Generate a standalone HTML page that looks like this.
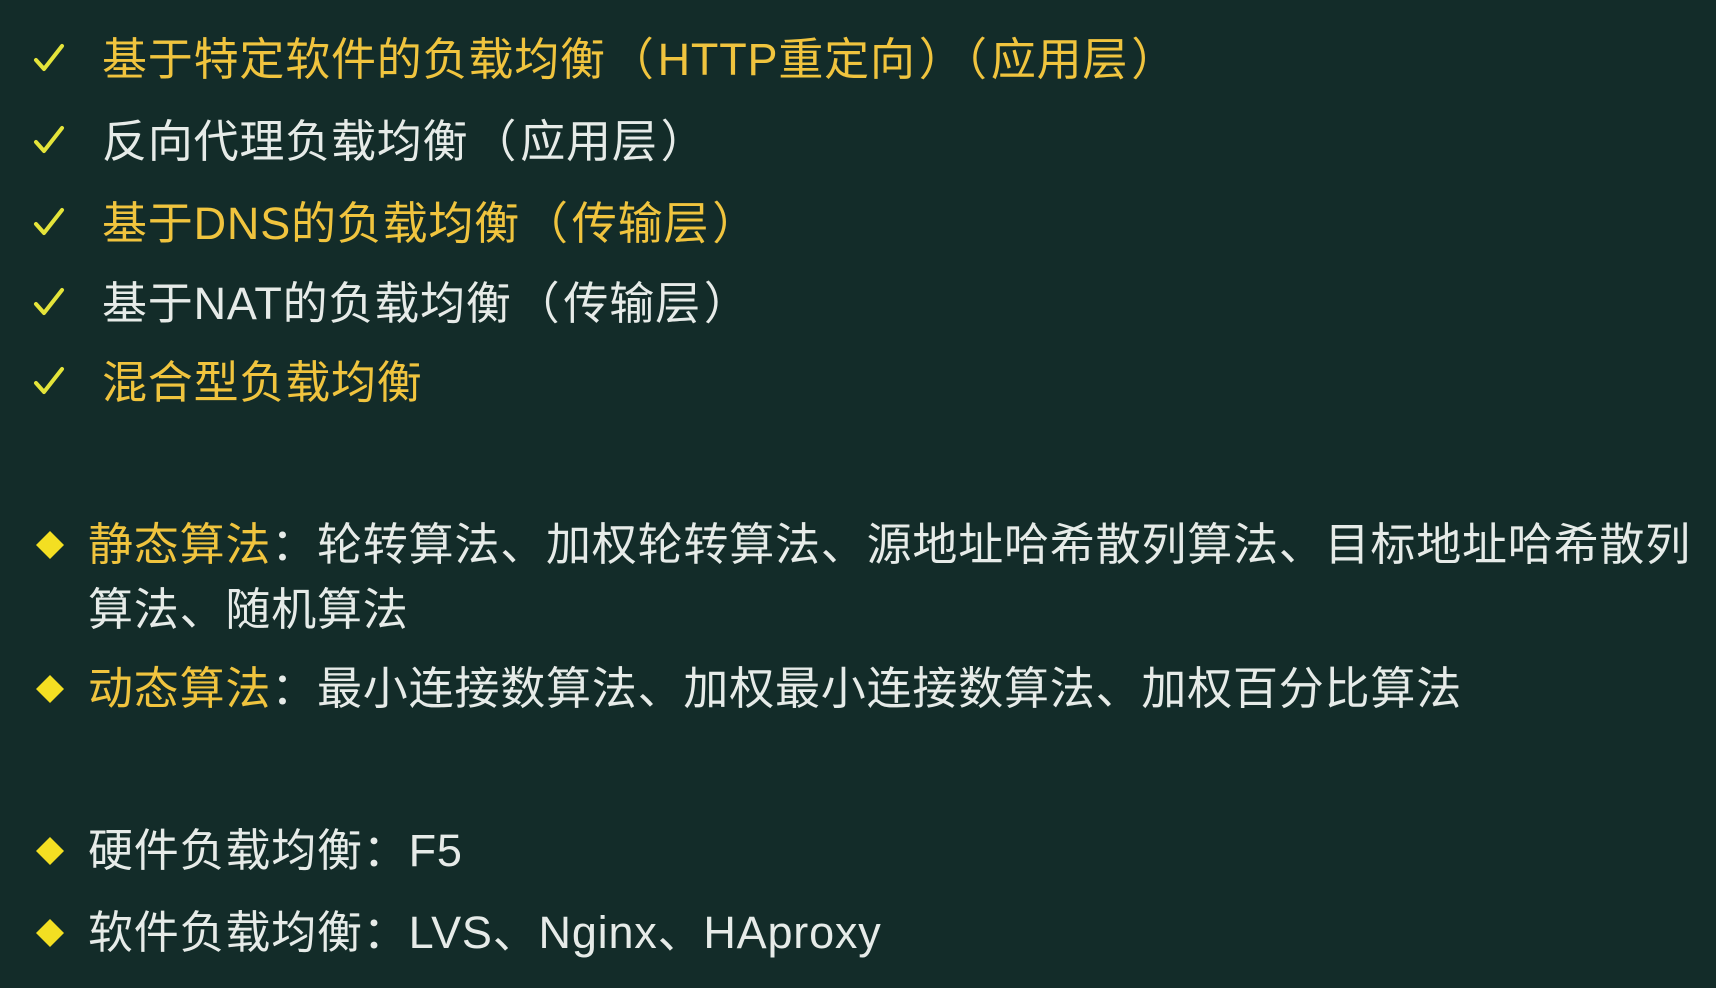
<!DOCTYPE html>
<html><head><meta charset="utf-8"><style>
html,body{margin:0;padding:0}
body{width:1716px;height:988px;background:#132c29;position:relative;overflow:hidden;font-family:"Liberation Sans","Noto Sans CJK SC",sans-serif;}
.l{position:absolute;white-space:nowrap;font-size:45px;line-height:46px;color:#e6ebe8;letter-spacing:0.8px}
.y{color:#f0c43e}
.p{padding:0 3px}
.ck{position:absolute;left:33px;width:32px;height:30px}
.dm{position:absolute;left:35px;width:30px;height:30px}
</style></head><body>
<svg class="ck" style="top:42px" viewBox="0 0 32 30"><path d="M3 18 L11 27 L29 4" stroke="#e4e43a" stroke-width="4" fill="none" stroke-linecap="round" stroke-linejoin="round"/></svg>
<svg class="ck" style="top:124px" viewBox="0 0 32 30"><path d="M3 18 L11 27 L29 4" stroke="#e4e43a" stroke-width="4" fill="none" stroke-linecap="round" stroke-linejoin="round"/></svg>
<svg class="ck" style="top:206px" viewBox="0 0 32 30"><path d="M3 18 L11 27 L29 4" stroke="#e4e43a" stroke-width="4" fill="none" stroke-linecap="round" stroke-linejoin="round"/></svg>
<svg class="ck" style="top:286px" viewBox="0 0 32 30"><path d="M3 18 L11 27 L29 4" stroke="#e4e43a" stroke-width="4" fill="none" stroke-linecap="round" stroke-linejoin="round"/></svg>
<svg class="ck" style="top:365px" viewBox="0 0 32 30"><path d="M3 18 L11 27 L29 4" stroke="#e4e43a" stroke-width="4" fill="none" stroke-linecap="round" stroke-linejoin="round"/></svg>

<div class="l y" style="left:102px;top:37px">基于特定软件的负载均衡<span class="p">（</span>HTTP重定向<span class="p">）（</span>应用层<span class="p">）</span></div>
<div class="l" style="left:102px;top:119px">反向代理负载均衡<span class="p">（</span>应用层<span class="p">）</span></div>
<div class="l y" style="left:102px;top:201px">基于DNS的负载均衡<span class="p">（</span>传输层<span class="p">）</span></div>
<div class="l" style="left:102px;top:281px">基于NAT的负载均衡<span class="p">（</span>传输层<span class="p">）</span></div>
<div class="l y" style="left:102px;top:360px">混合型负载均衡</div>

<svg class="dm" style="top:530px" viewBox="0 0 30 30"><path d="M15 1 L29 15 L15 29 L1 15Z" fill="#f3df22"/></svg>
<svg class="dm" style="top:674px" viewBox="0 0 30 30"><path d="M15 1 L29 15 L15 29 L1 15Z" fill="#f3df22"/></svg>
<svg class="dm" style="top:836px" viewBox="0 0 30 30"><path d="M15 1 L29 15 L15 29 L1 15Z" fill="#f3df22"/></svg>
<svg class="dm" style="top:918px" viewBox="0 0 30 30"><path d="M15 1 L29 15 L15 29 L1 15Z" fill="#f3df22"/></svg>

<div class="l" style="left:88px;top:522px"><span class="y">静态算法</span>：轮转算法、加权轮转算法、源地址哈希散列算法、目标地址哈希散列</div>
<div class="l" style="left:88px;top:587px">算法、随机算法</div>
<div class="l" style="left:88px;top:666px"><span class="y">动态算法</span>：最小连接数算法、加权最小连接数算法、加权百分比算法</div>
<div class="l" style="left:88px;top:828px">硬件负载均衡：F5</div>
<div class="l" style="left:88px;top:910px">软件负载均衡：LVS、Nginx、HAproxy</div>
</body></html>
